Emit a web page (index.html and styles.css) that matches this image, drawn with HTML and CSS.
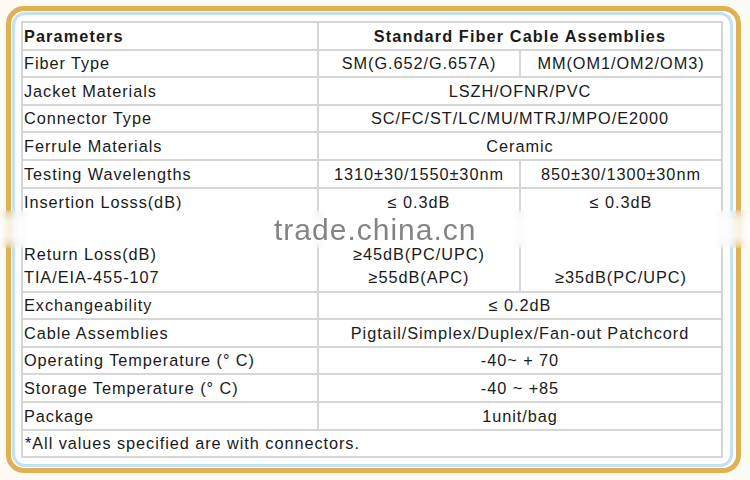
FILE: index.html
```html
<!DOCTYPE html>
<html>
<head>
<meta charset="utf-8">
<link rel="stylesheet" href="styles.css">
</head>
<body>
<div class="page">
  <div class="frame">
    <div class="inner">
      <div class="spec">
        <div class="c h">Parameters</div>
        <div class="c h s2 ctr">Standard Fiber Cable Assemblies</div>

        <div class="c">Fiber Type</div>
        <div class="c ctr">SM(G.652/G.657A)</div>
        <div class="c ctr">MM(OM1/OM2/OM3)</div>

        <div class="c">Jacket Materials</div>
        <div class="c s2 ctr">LSZH/OFNR/PVC</div>

        <div class="c">Connector Type</div>
        <div class="c s2 ctr">SC/FC/ST/LC/MU/MTRJ/MPO/E2000</div>

        <div class="c">Ferrule Materials</div>
        <div class="c s2 ctr">Ceramic</div>

        <div class="c">Testing Wavelengths</div>
        <div class="c ctr">1310±30/1550±30nm</div>
        <div class="c ctr">850±30/1300±30nm</div>

        <div class="c tall">
          <div class="top">Insertion Losss(dB)</div>
          <div class="bot"><div>Return Loss(dB)</div><div>TIA/EIA-455-107</div></div>
        </div>
        <div class="c tall ctr">
          <div class="top">≤ 0.3dB</div>
          <div class="bot"><div>≥45dB(PC/UPC)</div><div>≥55dB(APC)</div></div>
        </div>
        <div class="c tall ctr">
          <div class="top">≤ 0.3dB</div>
          <div class="bot"><div>≥35dB(PC/UPC)</div></div>
        </div>

        <div class="c">Exchangeability</div>
        <div class="c s2 ctr">≤ 0.2dB</div>

        <div class="c">Cable Assemblies</div>
        <div class="c s2 ctr">Pigtail/Simplex/Duplex/Fan-out Patchcord</div>

        <div class="c">Operating Temperature (° C)</div>
        <div class="c s2 ctr">-40~ + 70</div>

        <div class="c">Storage Temperature (° C)</div>
        <div class="c s2 ctr">-40 ~ +85</div>

        <div class="c">Package</div>
        <div class="c s2 ctr">1unit/bag</div>

        <div class="c s3">*All values specified are with connectors.</div>
      </div>
    </div>
  </div>
  <div class="band"></div>
  <div class="mark">trade.china.cn</div>
</div>
</body>
</html>
```
FILE: styles.css
```css
html, body {
  margin: 0;
  padding: 0;
  background: #fdfbf4;
}
.page {
  position: relative;
  width: 750px;
  height: 480px;
  overflow: hidden;
  font-family: "Liberation Sans", Arial, sans-serif;
  color: #1a1a1a;
}
.frame {
  box-sizing: border-box;
  margin: 6px 0 0 6px;
  width: 735px;
  height: 467px;
  border: 5px solid #e0b055;
  border-radius: 18px;
  padding: 1px 3px 1px 1px;
  background: #ffffff;
}
.inner {
  box-sizing: border-box;
  height: 100%;
  border: 3px solid #c2e1f1;
  border-radius: 13px;
  padding: 6px 7px 6px 6px;
  background: #ffffff;
}
.spec {
  box-sizing: border-box;
  width: 702px;
  display: grid;
  grid-template-columns: 294px 200px 200px;
  grid-template-rows: repeat(6, 25.6px) 102px repeat(6, 25.6px);
  gap: 2px;
  padding: 2px;
  background: #d6d6d6;
}
.c {
  background: #ffffff;
  display: flex;
  align-items: center;
  font-size: 16.3px;
  letter-spacing: 0.95px;
  line-height: 1;
  padding-left: 1px;
  white-space: nowrap;
}
.ctr {
  justify-content: center;
  padding-left: 0;
}
.s2 { grid-column: span 2; }
.s3 { grid-column: span 3; padding-left: 2px; }
.h {
  font-weight: bold;
  letter-spacing: 1.1px;
}
.tall {
  flex-direction: column;
  align-items: flex-start;
  justify-content: space-between;
  padding-bottom: 1.5px;
}
.tall.ctr {
  align-items: center;
}
.tall .top {
  line-height: 27px;
}
.tall .bot {
  line-height: 23px;
  display: flex;
  flex-direction: column;
  align-items: inherit;
}
.band {
  position: absolute;
  left: 0;
  top: 210px;
  width: 750px;
  height: 38px;
  backdrop-filter: blur(3px);
  background: linear-gradient(to bottom, rgba(255,255,255,0) 0%, rgba(255,255,255,0.7) 30%, rgba(255,255,255,0.7) 70%, rgba(255,255,255,0) 100%);
}
.mark {
  position: absolute;
  left: 274px;
  top: 215px;
  font-size: 30px;
  line-height: 30px;
  letter-spacing: 1px;
  color: rgba(110, 110, 110, 0.85);
  white-space: nowrap;
}
```
